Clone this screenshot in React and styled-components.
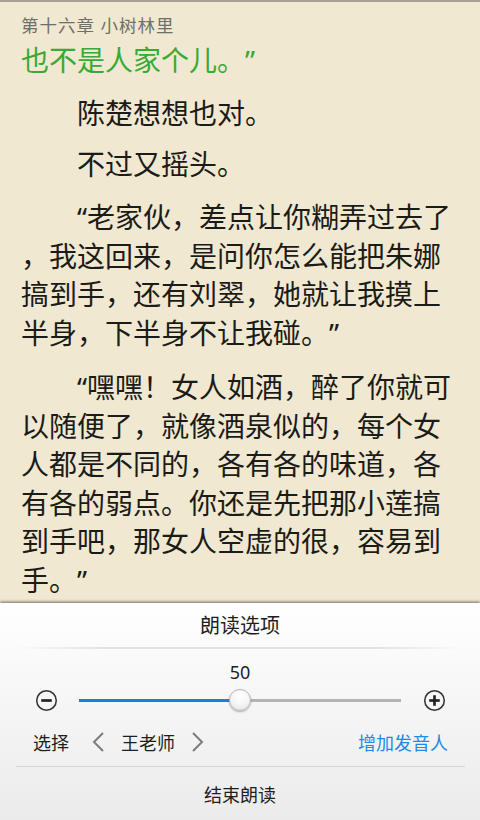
import React from 'react';
import styled, { createGlobalStyle } from 'styled-components';

const GlobalStyle = createGlobalStyle`
  html, body {
    margin: 0;
    padding: 0;
    background: #f0e8d1;
  }
  * {
    box-sizing: border-box;
  }
`;

const Screen = styled.div`
  width: 480px;
  height: 820px;
  display: flex;
  flex-direction: column;
  overflow: hidden;
  font-family: "Noto Sans", "Noto Sans CJK SC", sans-serif;
  text-spacing-trim: space-all;
`;

const Reader = styled.div`
  flex: 1;
  background: #f0e8d1;
  border-top: 2px solid #a5a196;
  padding: 11px 0 0 21px;
  overflow: hidden;
`;

const ChapterTitle = styled.div`
  font-size: 17.5px;
  line-height: 24px;
  color: #6f6f68;
  letter-spacing: 1px;
`;

const Paragraph = styled.div`
  margin-top: ${({ gap }) => gap}px;
  font-size: 28px;
  line-height: 38.5px;
  color: ${({ green }) => (green ? '#3aa935' : '#1b1b18')};
`;

const Line = styled.div`
  white-space: nowrap;
  padding-left: ${({ indent }) => (indent ? 56 : 0)}px;
`;

const Panel = styled.div`
  height: 217px;
  flex-shrink: 0;
  background: linear-gradient(#ffffff 0%, #f7f7f7 40%, #ebebeb 100%);
  box-shadow: 0 -1px 3px rgba(0, 0, 0, 0.55);
  display: flex;
  flex-direction: column;
`;

const PanelTitle = styled.div`
  height: 44px;
  line-height: 46px;
  text-align: center;
  font-size: 20px;
  color: #1e1e1e;
`;

const FadeDivider = styled.div`
  height: 2px;
  margin: 0 16px;
  background: linear-gradient(90deg, rgba(220,220,220,0) 0%, #e2e2e2 20%, #e2e2e2 80%, rgba(220,220,220,0) 100%);
`;

const ValueLabel = styled.div`
  margin-top: 10px;
  height: 26px;
  line-height: 26px;
  text-align: center;
  font-size: 18px;
  color: #1e1e1e;
`;

const SliderRow = styled.div`
  height: 30px;
  display: flex;
  align-items: center;
  padding: 0 34px 0 35px;
`;

const StepIcon = styled.svg`
  width: 23px;
  height: 23px;
  flex-shrink: 0;
`;

const Track = styled.div`
  position: relative;
  flex: 1;
  height: 3px;
  margin: 0 22px 0 21px;
  background: #b3b3b3;
`;

const TrackFill = styled.div`
  position: absolute;
  left: 0;
  top: 0;
  bottom: 0;
  background: #1a7ee0;
`;

const Thumb = styled.div`
  position: absolute;
  top: 50%;
  width: 22px;
  height: 22px;
  margin: -11px 0 0 -11px;
  border-radius: 50%;
  background: radial-gradient(circle at 50% 30%, #ffffff 0%, #f4f4f4 55%, #dcdcdc 100%);
  border: 1px solid #b9b9b9;
  box-shadow: 0 1px 2px rgba(0, 0, 0, 0.3);
`;

const SelectRow = styled.div`
  margin-top: 7px;
  height: 40px;
  display: flex;
  align-items: center;
  padding: 0 32px 0 33px;
  font-size: 18px;
  color: #1e1e1e;
`;

const Label = styled.span`
  margin: 0 ${({ right }) => right}px 0 ${({ left }) => left}px;
`;

const Chevron = styled.svg`
  width: 14px;
  height: 22px;
  flex-shrink: 0;
`;

const AddVoice = styled.span`
  margin-left: auto;
  color: #1e8ae8;
`;

const Divider = styled.div`
  margin: 4px 15px 0 16px;
  height: 1px;
  background: #d4d4d4;
`;

const EndButton = styled.div`
  flex: 1;
  padding-top: 4px;
  line-height: 48px;
  text-align: center;
  font-size: 18px;
  color: #1e1e1e;
`;

const paragraphs = [
  { gap: 4, green: true, lines: ['也不是人家个儿。”'] },
  { gap: 14.5, indent: true, lines: ['陈楚想想也对。'] },
  { gap: 12, indent: true, lines: ['不过又摇头。'] },
  {
    gap: 15,
    indent: true,
    lines: [
      '“老家伙，差点让你糊弄过去了',
      '，我这回来，是问你怎么能把朱娜',
      '搞到手，还有刘翠，她就让我摸上',
      '半身，下半身不让我碰。”',
    ],
  },
  {
    gap: 16,
    indent: true,
    lines: [
      '“嘿嘿！女人如酒，醉了你就可',
      '以随便了，就像酒泉似的，每个女',
      '人都是不同的，各有各的味道，各',
      '有各的弱点。你还是先把那小莲搞',
      '到手吧，那女人空虚的很，容易到',
      '手。”',
    ],
  },
];

const MinusIcon = () => (
  <StepIcon viewBox="0 0 24 24">
    <circle cx="12" cy="12" r="10.2" fill="none" stroke="#333" strokeWidth="1.6" />
    <rect x="6.5" y="10.6" width="11" height="2.8" fill="#222" />
  </StepIcon>
);

const PlusIcon = () => (
  <StepIcon viewBox="0 0 24 24">
    <circle cx="12" cy="12" r="10.2" fill="none" stroke="#333" strokeWidth="1.6" />
    <rect x="6.5" y="10.6" width="11" height="2.8" fill="#222" />
    <rect x="10.6" y="6.5" width="2.8" height="11" fill="#222" />
  </StepIcon>
);

const ChevronLeft = () => (
  <Chevron viewBox="0 0 14 22">
    <polyline points="12,2 3,11 12,20" fill="none" stroke="#7c7c7c" strokeWidth="2" />
  </Chevron>
);

const ChevronRight = () => (
  <Chevron viewBox="0 0 14 22">
    <polyline points="2,2 11,11 2,20" fill="none" stroke="#7c7c7c" strokeWidth="2" />
  </Chevron>
);

const App = () => {
  const speed = 50;

  return (
    <Screen>
      <GlobalStyle />
      <Reader>
        <ChapterTitle>第十六章 小树林里</ChapterTitle>
        {paragraphs.map((p, i) => (
          <Paragraph key={i} gap={p.gap} green={p.green}>
            {p.lines.map((line, j) => (
              <Line key={j} indent={p.indent && j === 0}>
                {line}
              </Line>
            ))}
          </Paragraph>
        ))}
      </Reader>

      <Panel>
        <PanelTitle>朗读选项</PanelTitle>
        <FadeDivider />
        <ValueLabel>{speed}</ValueLabel>
        <SliderRow>
          <MinusIcon />
          <Track>
            <TrackFill style={{ width: `${speed}%` }} />
            <Thumb style={{ left: `${speed}%` }} />
          </Track>
          <PlusIcon />
        </SliderRow>
        <SelectRow>
          <Label left={0} right={22}>选择</Label>
          <ChevronLeft />
          <Label left={16} right={16}>王老师</Label>
          <ChevronRight />
          <AddVoice>增加发音人</AddVoice>
        </SelectRow>
        <Divider />
        <EndButton>结束朗读</EndButton>
      </Panel>
    </Screen>
  );
};

export default App;
